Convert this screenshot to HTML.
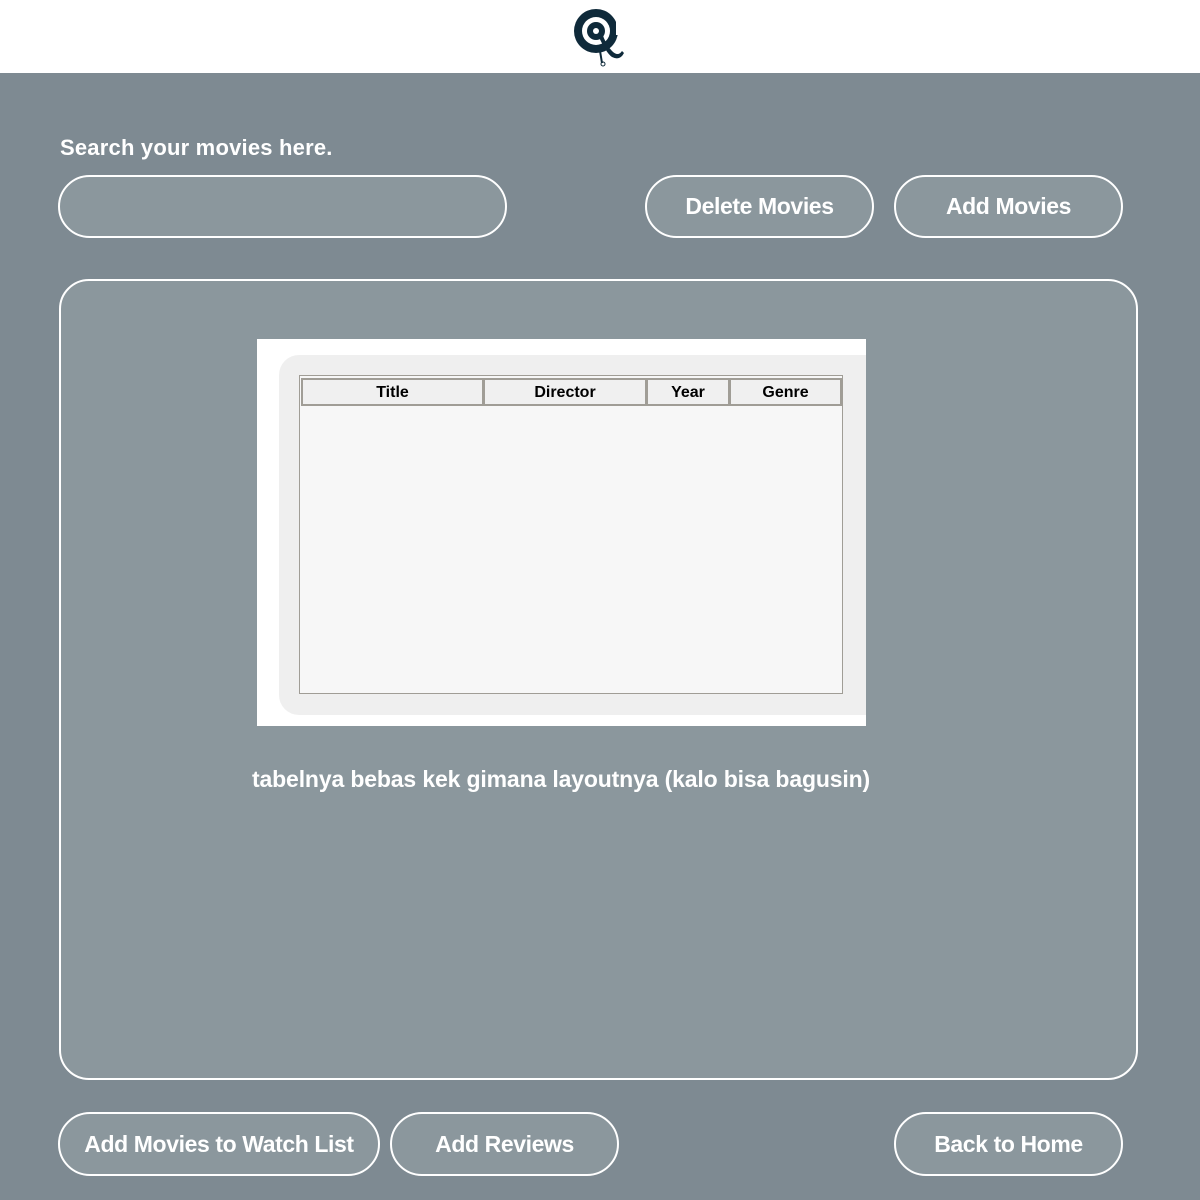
<!DOCTYPE html>
<html><head><meta charset="utf-8"><style>
*{margin:0;padding:0;box-sizing:border-box}
body{width:1200px;height:1200px;background:#7e8a92;font-family:"Liberation Sans",sans-serif;position:relative;overflow:hidden}
.hdr{position:absolute;left:0;top:0;width:1200px;height:73px;background:#fff}
.lbl{position:absolute;left:60px;top:135px;color:#fff;font-weight:bold;font-size:22px;letter-spacing:0.2px}
.pill{position:absolute;border:2px solid #fff;border-radius:32px;background:#8b979d;color:#fff;font-weight:bold;font-size:23px;display:flex;align-items:center;justify-content:center;letter-spacing:-0.4px}
.panel{position:absolute;left:59px;top:279px;width:1079px;height:801px;border:2px solid #fff;border-radius:30px;background:#8b979d}
.img{position:absolute;left:257px;top:339px;width:609px;height:387px;background:#fff;overflow:hidden}
.inner{position:absolute;left:22px;top:16px;width:620px;height:360px;background:#efefef;border-radius:20px}
.tbl{position:absolute;left:42px;top:36px;width:544px;height:319px;border:1px solid #a09d96;background:#f7f7f7}
.th{position:absolute;top:2px;height:28px;border:2px solid #a09d96;background:#f0f0f0;font-weight:bold;font-size:16px;display:flex;align-items:center;justify-content:center;color:#000;padding-top:2px}
.cap{position:absolute;left:252px;top:766px;color:#fff;font-weight:bold;font-size:23px;letter-spacing:-0.15px}
</style></head><body>
<div class="hdr">
<svg style="position:absolute;left:572px;top:5px" width="56" height="62" viewBox="0 0 56 62">
<circle cx="24" cy="26" r="22" fill="#0f2a3a"/>
<circle cx="24" cy="26" r="14" fill="#fff"/>
<circle cx="24" cy="26" r="9" fill="#0f2a3a"/>
<circle cx="24" cy="26" r="3" fill="#fff"/>
<rect x="44" y="10" width="12" height="20" fill="#fff"/>
<path d="M26 30 Q34 48 40 52 Q48 56 52 48 L50 46 Q46 52 40 46 Q34 40 30 28Z" fill="#0f2a3a"/>
<path d="M28 46 L30 58" stroke="#0f2a3a" stroke-width="2"/>
<circle cx="31" cy="59" r="2" fill="none" stroke="#0f2a3a"/>
</svg>
</div>
<div class="lbl">Search your movies here.</div>
<div class="pill" style="left:58px;top:175px;width:449px;height:63px"></div>
<div class="pill" style="left:645px;top:175px;width:229px;height:63px">Delete Movies</div>
<div class="pill" style="left:894px;top:175px;width:229px;height:63px">Add Movies</div>
<div class="panel"></div>
<div class="img"><div class="inner"></div>
<div class="tbl">
<div class="th" style="left:1px;width:183px">Title</div>
<div class="th" style="left:183px;width:164px">Director</div>
<div class="th" style="left:346px;width:84px">Year</div>
<div class="th" style="left:429px;width:113px">Genre</div>
</div></div>
<div class="cap">tabelnya bebas kek gimana layoutnya (kalo bisa bagusin)</div>
<div class="pill" style="left:58px;top:1112px;width:322px;height:64px">Add Movies to Watch List</div>
<div class="pill" style="left:390px;top:1112px;width:229px;height:64px">Add Reviews</div>
<div class="pill" style="left:894px;top:1112px;width:229px;height:64px">Back to Home</div>
</body></html>
